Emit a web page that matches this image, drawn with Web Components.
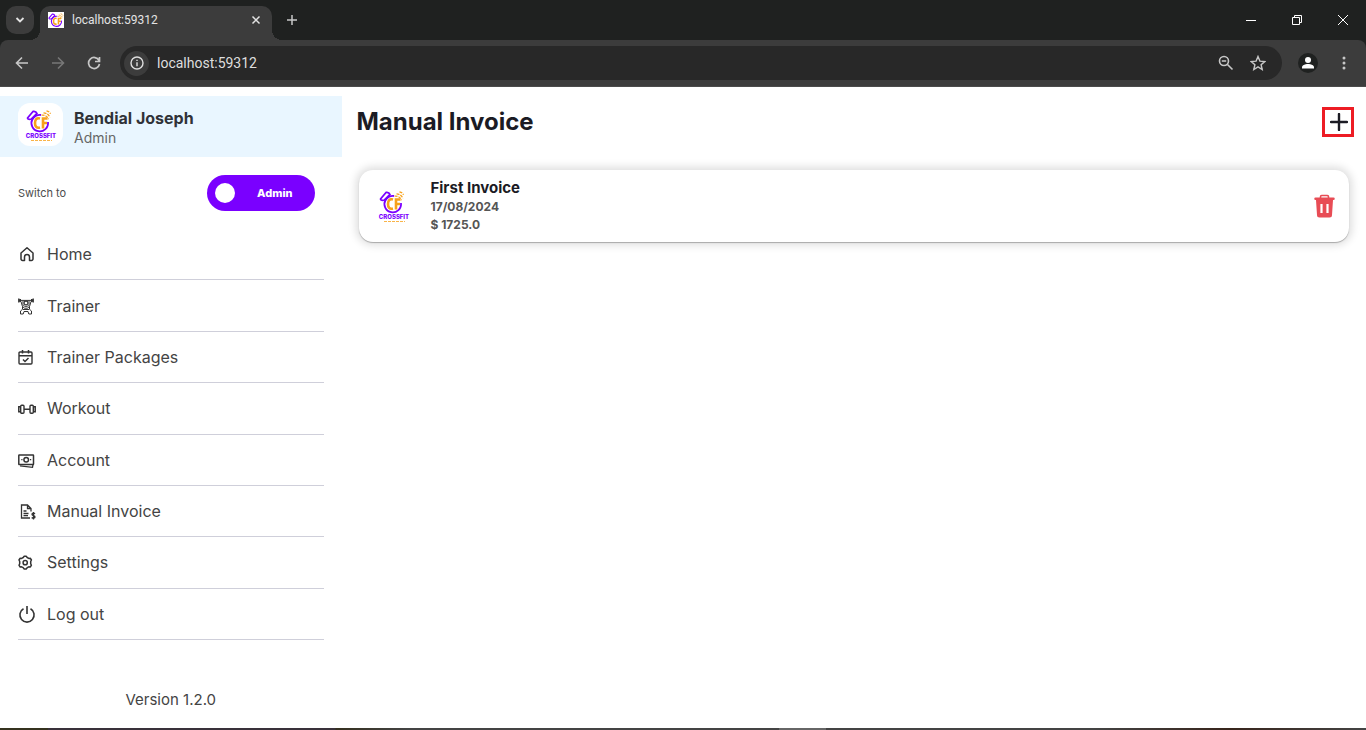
<!DOCTYPE html>
<html lang="en">
<head>
<meta charset="utf-8">
<title>localhost:59312</title>
<style>
html,body{margin:0;height:100%}
body{font-family:Inter,"Open Sans",sans-serif;background:#fff;color:#3c3c3c}
</style>
</head>
<body>
<app-window></app-window>
<script>
const define = (name, css, html) => customElements.define(name, class extends HTMLElement {
  connectedCallback() {
    if (this.shadowRoot) return;
    const root = this.attachShadow({ mode: 'open' });
    const t = document.createElement('template');
    t.innerHTML = '<style>*{box-sizing:border-box}button{font:inherit;color:inherit;border:0;background:none;padding:0;margin:0;display:grid;place-items:center;flex:none}svg{display:block}' + css + '</style>' + (typeof html === 'function' ? html(this) : html);
    root.append(t.content.cloneNode(true));
  }
});

const mark = `<g fill="none" stroke="#7a00ff" stroke-width="1.800">
  <path d="M1.500 9 7 2.500Q10 2 11 4.500L5.500 10Q2 11 1.500 9Z" stroke-linejoin="round"/>
  <path d="M6.500 10a8.300 8.300 0 1 0 15.500 3" stroke-width="1.800"/><path d="M6.500 10.500C8 7 12 5.500 15 6"/></g>
  <g fill="none" stroke="#f7a11b"><path d="M14 9.500c-3.500-1-5 1-5 4.500s1.500 5.500 5 4.500M17 19.500V9.500h4.500M17 14h4" stroke-width="2.600"/>
  <path d="M15.500 6.200c3-.4 6 .8 7 4M17.500 3.800c3 .2 5.500 2 6.300 4.600M20.500 1.800c2 .5 3.500 1.500 4 3" stroke-width="1.300" stroke-dasharray="3 1"/></g>`;

const icons = {
  home: '<path d="M3 8 9 2.800 15 8v6a1.500 1.500 0 0 1-1.500 1.500h-2V12a2.500 2.500 0 0 0-5 0v3.500h-2A1.500 1.500 0 0 1 3 14Z" stroke-width="1.500" stroke-linejoin="round"/>',
  trainer: '<path d="M.8 1.500v4M2.300 2v3M13.700 2v3M15.200 1.500v4" stroke-width="1.400"/><path d="M1 3.400h14" stroke-width="1"/><path d="M3 4.500 4.300 9l2 2.200h3.400l2-2.200L13 4.500M5 4v3.500l1.500 1.800h3L11 7.500V4" stroke-width="1"/><circle cx="8" cy="6" r="1.900" stroke-width="1.100"/><path d="M4.500 9.500v2.800L2.500 14v3h2.700l.8-2.500h4l.8 2.500h2.700v-3l-2-1.700V9.500M5 12.500h6" stroke-width="1"/>',
  packages: '<rect x="1" y="4" width="13" height="12" rx="1"/><path d="M1 7.800h13M4.500 2v3.500M10.500 2v3.500M5 11.500l2 2 3.500-3.500" stroke-width="1.500"/>',
  workout: '<rect x="2.700" y="6.200" width="3.300" height="8" rx="1"/><rect x="12" y="6.200" width="3.300" height="8" rx="1"/><path d="M6 10.200h6M2.700 7.700H.8v5h1.900M15.300 7.700h1.900v5h-1.900" stroke-width="1.500"/>',
  account: '<rect x=".8" y="4" width="14.700" height="9.500" rx=".5" stroke-width="1.500"/><circle cx="8.200" cy="8.700" r="2.300" stroke-width="1.500"/><path d="M3.300 8.700h1.200M12 8.700h1.200M2 14.800l12.500 1.500.5-3" stroke-width="1.300"/>',
  invoice: '<path d="M13 9.500v-3L9.500 3h-6v13H12M9.500 3v3.500H13M5.500 9h3M5.500 11.500h5M5.500 13.700h4.500" stroke-width="1.300"/><path d="M17 11.800c-1-1-3-.7-3 .6 0 1.600 3 1 3 2.600 0 1.400-2.300 1.500-3.300.5M15.500 10v7.500" stroke-width="1.300"/>',
  settings: '<path d="M5.200 4.500 6.200 3.200h2l1 1.300 1.600.9 1.600-.1 1 1.700-.7 1.500v2.200l.7 1.500-1 1.700-1.600-.1-1.600.9-1 1.200h-2l-1-1.200-1.600-.9-1.600.1-1-1.700.7-1.500V8.500L1 7l1-1.700 1.600.1Z" stroke-width="1.500" stroke-linejoin="round"/><circle cx="7.200" cy="9.700" r="2.100" stroke-width="1.500"/>',
  logout: '<path d="M5.500 3.800a7.100 7.100 0 1 0 7 0M9 1v8" stroke-width="1.600"/>'
};

define('crossfit-logo', ':host{display:block;width:34px;height:34px;flex:none}text{font:800 6px Inter,sans-serif;fill:#7a00ff}',
  `<svg width="34" height="34" viewBox="0 0 34 34" role="img" aria-label="CrossFit"><g transform="translate(2 1)">${mark}</g><text x="17" y="30" text-anchor="middle">CROSSFIT</text><path d="M7 32.500h21" stroke="#f7a11b" stroke-dasharray="3 1" stroke-width=".8"/></svg>`);

define('browser-tabs', `
:host{display:flex;height:40px;background:#1f2120;color:#e3e3e3;align-items:flex-end;flex:none}
.search{width:28px;height:28px;border-radius:10px;background:#3c3c3c;margin:0 6px 6px}
.tab{display:flex;align-items:center;gap:8px;width:232px;height:34px;padding:0 8px 6px;background:#3c3c3c;border-radius:10px 10px 0 0;font:12px/16px Roboto,sans-serif;position:relative}
.tab:before,.tab:after{content:"";position:absolute;bottom:0;width:10px;height:10px}
.tab:before{right:100%;background:radial-gradient(circle at 0 0,transparent 10px,#3c3c3c 10px)}
.tab:after{left:100%;background:radial-gradient(circle at 100% 0,transparent 10px,#3c3c3c 10px)}
.tab span{flex:1}.fav{background:#fff;flex:none}.tab button{width:16px;height:16px}
.new{width:40px;height:40px}.gap{flex:1}.win{width:46px;height:40px;color:#fff}`, `
<button class="search" aria-label="Search tabs"><svg width="10" height="10" fill="none" stroke="currentColor" stroke-width="1.800"><path d="m1.500 3 3.500 3.500L8.500 3"/></svg></button>
<div class="tab"><svg class="fav" width="16" height="16" viewBox="0 0 26 24">${mark}</svg><span>localhost:59312</span><button aria-label="Close tab"><svg width="10" height="10" stroke="currentColor" stroke-width="1.500"><path d="m1.500 1.500 7 7m0-7-7 7"/></svg></button></div>
<button class="new" aria-label="New tab"><svg width="12" height="12" stroke="#c7c7c7" stroke-width="1.500"><path d="M6 1v10M1 6h10"/></svg></button>
<div class="gap"></div>
<button class="win" aria-label="Minimize"><svg width="10" height="10" stroke="currentColor"><path d="M0 5.500h10"/></svg></button>
<button class="win" aria-label="Restore"><svg width="10" height="10" fill="none" stroke="currentColor"><path d="M.5 2.500h7v7h-7zM2.500 2.500v-2h7v7h-2"/></svg></button>
<button class="win" aria-label="Close"><svg width="10" height="10" stroke="currentColor"><path d="m0 0 10 10M10 0 0 10"/></svg></button>`);

define('browser-toolbar', `
:host{display:flex;align-items:center;height:47px;background:#3c3c3c;border-bottom:1px solid #4b4b4b;color:#c7c7c7;padding:0 8px 0 4px;border-radius:8px 8px 0 0;flex:none}
.nav{width:36px;height:34px}.dim{color:#777}
form{flex:1;display:flex;align-items:center;height:34px;margin:0 12px 0 8px;padding:0 8px 0 4px;border-radius:17px;background:#282828}
.info{width:25px;height:25px;border-radius:50%;background:#3c3c3c;color:#dedede}
input{flex:1;min-width:0;border:0;outline:0;background:none;color:#dedede;font:14px/20px Roboto,sans-serif;padding:0 8px}
form .act{width:32px;height:32px}
.me{width:28px;height:34px}.more{width:28px;height:34px;margin-left:8px}`, `
<button class="nav" aria-label="Back"><svg width="14" height="14" fill="none" stroke="currentColor" stroke-width="1.600"><path d="M13 7H2M7 1.500 1.500 7 7 12.500"/></svg></button>
<button class="nav dim" aria-label="Forward"><svg width="14" height="14" fill="none" stroke="currentColor" stroke-width="1.600"><path d="M1 7h11M7 1.500 12.500 7 7 12.500"/></svg></button>
<button class="nav" aria-label="Reload"><svg width="14" height="14" fill="none" stroke="currentColor" stroke-width="1.700"><path d="M12 4.500A5.500 5.500 0 1 0 12.500 8M12.500 1v4.500H8"/></svg></button>
<form><button type="button" class="info" aria-label="Site information"><svg width="14" height="14" fill="none" stroke="currentColor" stroke-width="1.400"><circle cx="7" cy="7" r="6"/><path d="M7 6.200v4M7 3.700v1.400"/></svg></button>
<input aria-label="Address" value="localhost:59312">
<button type="button" class="act" aria-label="Zoom"><svg width="16" height="16" fill="none" stroke="currentColor" stroke-width="1.600"><circle cx="6" cy="6" r="4.500"/><path d="m9.500 9.500 5 5M3.800 6h4.400"/></svg></button>
<button type="button" class="act" aria-label="Bookmark"><svg width="16" height="16" fill="none" stroke="currentColor" stroke-width="1.400"><path d="m8 1.500 1.900 4.600 4.900.4-3.700 3.200 1.100 4.800L8 11.900l-4.200 2.600 1.100-4.800L1.200 6.500l4.900-.4Z"/></svg></button></form>
<button class="me" aria-label="Profile"><svg width="20" height="20"><circle cx="10" cy="10" r="10" fill="#1f2120"/><circle cx="10" cy="7" r="3" fill="#fff"/><path d="M4 15.500v-1.200c0-2 3-3.300 6-3.300s6 1.300 6 3.300v1.200Z" fill="#fff"/></svg></button>
<button class="more" aria-label="Menu"><svg width="4" height="16" fill="currentColor"><circle cx="2" cy="3" r="1.500"/><circle cx="2" cy="8" r="1.500"/><circle cx="2" cy="13" r="1.500"/></svg></button>`);

define('user-card', `
:host{display:flex;align-items:center;gap:11px;height:61px;padding:0 18px;background:#e9f6ff;flex:none}
.avatar{width:45px;height:43px;margin-bottom:4px;border-radius:12px;background:#fff;display:grid;place-items:center;flex:none}
strong,span{display:block}strong{font-size:16px;line-height:22px;font-weight:700;color:#303238}span{font-size:14px;line-height:18px;color:#666}`, `
<div class="avatar"><crossfit-logo></crossfit-logo></div><div><strong><slot name="name"></slot></strong><span><slot name="role"></slot></span></div>`);

define('role-switch', `
:host{display:flex;justify-content:space-between;align-items:center;height:36px;margin:18px 27px 18px 18px;font-size:11px;color:#4c4c4c;flex:none}
label{position:relative;width:108px;height:36px;border-radius:18px;background:#7a00ff;display:flex;align-items:center;justify-content:flex-end;padding-right:22px;color:#fff;font-weight:800}
input{appearance:none;margin:0;position:absolute;inset:0}
input:before{content:"";position:absolute;left:8px;top:8px;width:20px;height:20px;border-radius:50%;background:#fff}
input:checked:before{left:80px}`, `<span>Switch to</span><label><input type="checkbox" role="switch"><slot></slot></label>`);

define('nav-item', `
:host{display:flex;flex:1;min-height:40px;border-bottom:1px solid #cfcfda}
a{flex:1;display:flex;align-items:center;gap:11px;color:#444;text-decoration:none;font-size:16px;line-height:20px}
svg{flex:none;fill:none;stroke:#333;stroke-width:1.400}`,
el => `<a href="#${el.getAttribute('icon')}"><svg width="18" height="18" aria-hidden="true">${icons[el.getAttribute('icon')]}</svg><slot></slot></a>`);

define('side-bar', `
:host{display:flex;flex-direction:column;width:25%;min-width:260px;padding-top:9px}
nav{flex:1;display:flex;flex-direction:column;margin:0 18px}
footer{height:88px;padding-top:32px;display:grid;place-items:center;font-size:15px;line-height:20px;color:#444;flex:none}`, `
<user-card><span slot="name">Bendial Joseph</span><span slot="role">Admin</span></user-card>
<role-switch>Admin</role-switch>
<nav><nav-item icon="home">Home</nav-item><nav-item icon="trainer">Trainer</nav-item><nav-item icon="packages">Trainer Packages</nav-item><nav-item icon="workout">Workout</nav-item><nav-item icon="account">Account</nav-item><nav-item icon="invoice">Manual Invoice</nav-item><nav-item icon="settings">Settings</nav-item><nav-item icon="logout">Log out</nav-item></nav>
<footer><span>Version 1.2.0</span></footer>`);

define('invoice-card', `
:host{display:flex;align-items:center;height:72px;padding:0 14px 0 18px;border-radius:14px;background:#fff;box-shadow:0 0 8px 3px #0002,0 1px 1px #0004}
.text{flex:1;margin-left:20px}
h2{margin:0;font-size:15px;line-height:20px;font-weight:700;color:#1b1b24}
p{margin:0;font-size:12px;line-height:18px;font-weight:700;color:#555}`, `
<crossfit-logo></crossfit-logo>
<div class="text"><h2><slot name="title"></slot></h2><p><slot name="date"></slot></p><p><slot name="amount"></slot></p></div>
<button aria-label="Delete invoice"><svg width="21" height="24"><path d="M6.500 4V2.700a1.200 1.200 0 0 1 1.200-1.200h5.600a1.200 1.200 0 0 1 1.200 1.200V4" fill="none" stroke="#e84c55" stroke-width="1.600"/><path d="M1.500 3.500h18a1 1 0 0 1 0 2.500H19l-1 15a2.500 2.500 0 0 1-2.500 2.500h-10A2.500 2.500 0 0 1 3 21L2 6h-.5a1 1 0 0 1 0-2.500Z" fill="#e84c55"/><path d="M7.500 10v9M13.500 10v9" stroke="#fff" stroke-width="2.200"/></svg></button>`);

define('invoice-page', `
:host{display:block;flex:1;min-width:0;padding:20px 17px 0}
header{display:flex;align-items:center;justify-content:space-between;height:30px;margin:0 -5px 33px -2px}
h1{margin:0;font-size:24px;line-height:30px;font-weight:700;color:#1b1b24}
.add{width:32px;height:30px;border:3px solid #ed1c24}
.add svg{margin-left:2px}`, `
<header><h1>Manual Invoice</h1><button class="add" aria-label="Add invoice"><svg width="18" height="18" stroke="#1b1b24" stroke-width="2.400" stroke-linecap="round"><path d="M9 1v16M1 9h16"/></svg></button></header>
<invoice-card><span slot="title">First Invoice</span><span slot="date">17/08/2024</span><span slot="amount">$ 1725.0</span></invoice-card>`);

define('app-window', `
:host{display:flex;flex-direction:column;min-height:100vh;background:#1f2120}
main{flex:1;display:flex;background:#fff}
.edge{height:2px;background:linear-gradient(90deg,#35321f 0 48px,#39313a 48px 335px,#35301f 336px,#444 30% 57%,#666 57% 60.500%,#444 60.500% 80%,#38251c 90%,#444);flex:none}`, `
<browser-tabs></browser-tabs><browser-toolbar></browser-toolbar>
<main><side-bar></side-bar><invoice-page></invoice-page></main><div class="edge"></div>`);
</script>
</body>
</html>
